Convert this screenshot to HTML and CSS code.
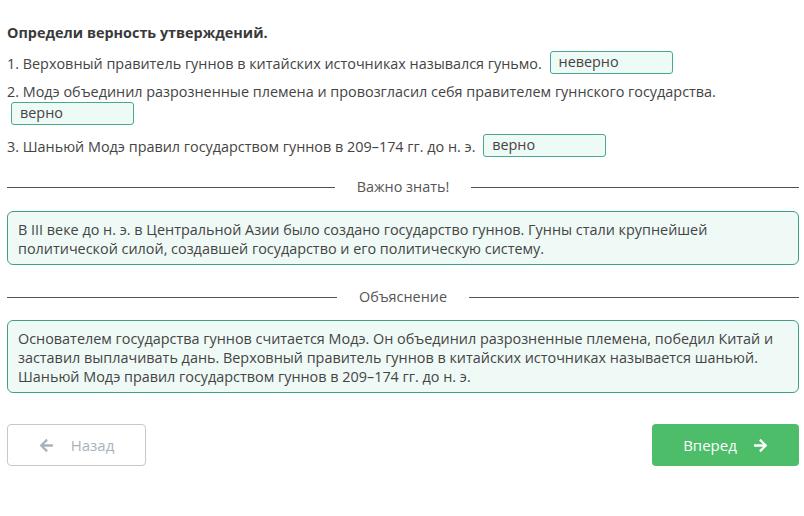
FILE: index.html
```
<!DOCTYPE html>
<html lang="ru">
<head>
<meta charset="utf-8">
<link rel="stylesheet" href="styles.css">
</head>
<body>
<div class="page">
  <div class="title">Определи верность утверждений.</div>
  <div class="item item1">1. Верховный правитель гуннов в китайских источниках назывался гуньмо. <span class="answer">неверно</span></div>
  <div class="item item2">2. Модэ объединил разрозненные племена и провозгласил себя правителем гуннского государства. <span class="answer">верно</span></div>
  <div class="item item3">3. Шаньюй Модэ правил государством гуннов в 209–174 гг. до н. э. <span class="answer">верно</span></div>

  <div class="divider div1"><span class="line"></span><span class="label">Важно знать!</span><span class="line"></span></div>
  <div class="note note1">В III веке до н. э. в Центральной Азии было создано государство гуннов. Гунны стали крупнейшей политической силой, создавшей государство и его политическую систему.</div>

  <div class="divider div2"><span class="line"></span><span class="label">Объяснение</span><span class="line"></span></div>
  <div class="note">Основателем государства гуннов считается Модэ. Он объединил разрозненные племена, победил Китай и заставил выплачивать дань. Верховный правитель гуннов в китайских источниках называется шаньюй. Шаньюй Модэ правил государством гуннов в 209–174 гг. до н. э.</div>

  <div class="nav">
    <div class="btn back">
      <svg class="ico" viewBox="0 0 448 512"><path fill="currentColor" d="M257.5 445.1l-22.2 22.2c-9.4 9.4-24.6 9.4-33.9 0L7 273c-9.4-9.4-9.4-24.6 0-33.9L201.4 44.7c9.4-9.4 24.6-9.4 33.9 0l22.2 22.2c9.5 9.5 9.3 25-.4 34.3L136.6 216H424c13.3 0 24 10.7 24 24v32c0 13.3-10.7 24-24 24H136.6l120.5 114.8c9.8 9.3 10 24.8.4 34.3z"/></svg>
      <span>Назад</span>
    </div>
    <div class="btn next">
      <span>Вперед</span>
      <svg class="ico" viewBox="0 0 448 512"><path fill="currentColor" d="M190.5 66.9l22.2-22.2c9.4-9.4 24.6-9.4 33.9 0L441 239c9.4 9.4 9.4 24.6 0 33.9L246.6 467.3c-9.4 9.4-24.6 9.4-33.9 0l-22.2-22.2c-9.5-9.5-9.3-25 .4-34.3L311.4 296H24c-13.3 0-24-10.7-24-24v-32c0-13.3 10.7-24 24-24h287.4L190.9 101.2c-9.8-9.3-10-24.8-.4-34.3z"/></svg>
    </div>
  </div>
</div>
</body>
</html>
```

FILE: styles.css
```
html, body {
  margin: 0;
  padding: 0;
  background: #fff;
}
.page {
  padding: 23px 5px 0 7px;
  font-family: "Open Sans", "Liberation Sans", sans-serif;
  font-size: 14.4px;
  color: #444;
  display: flex;
  flex-direction: column;
}
.title {
  font-weight: bold;
  line-height: 20px;
  color: #3a3a3a;
}
.item {
  line-height: 21px;
}
.item1 { margin-top: 8px; }
.item2 { margin-top: 7px; }
.item3 { margin-top: 9px; }
.answer {
  display: inline-block;
  box-sizing: border-box;
  width: 123px;
  height: 23px;
  line-height: 20px;
  padding: 0 8px;
  margin-left: 4px;
  border: 1px solid #4aa891;
  border-radius: 3px;
  background: #eefaf5;
  color: #444;
  vertical-align: 2px;
}
.divider {
  display: flex;
  align-items: center;
  gap: 22px;
  line-height: 20px;
  color: #555;
}
.div1 { margin-top: 20px; }
.div2 { margin-top: 22px; }
.divider .line {
  flex: 1;
  height: 1px;
  background: #555;
}
.note {
  margin-top: 13px;
  border: 1px solid #3e9f8b;
  border-radius: 6px;
  background: #effaf6;
  padding: 8px 10px 6px;
  line-height: 19px;
}
.note1 { margin-top: 14px; }
.nav {
  margin-top: 31px;
  display: flex;
  justify-content: space-between;
}
.btn {
  box-sizing: border-box;
  height: 42px;
  border-radius: 4px;
  display: flex;
  align-items: center;
  justify-content: center;
  font-size: 15px;
  gap: 17px;
}
.back {
  width: 139px;
  border: 1px solid #c3c9ce;
  color: #a7b2bb;
}
.next {
  width: 147px;
  background: #4dbd6a;
  color: #fff;
  gap: 16px;
}
.ico {
  width: 15px;
  height: 15px;
}
```
